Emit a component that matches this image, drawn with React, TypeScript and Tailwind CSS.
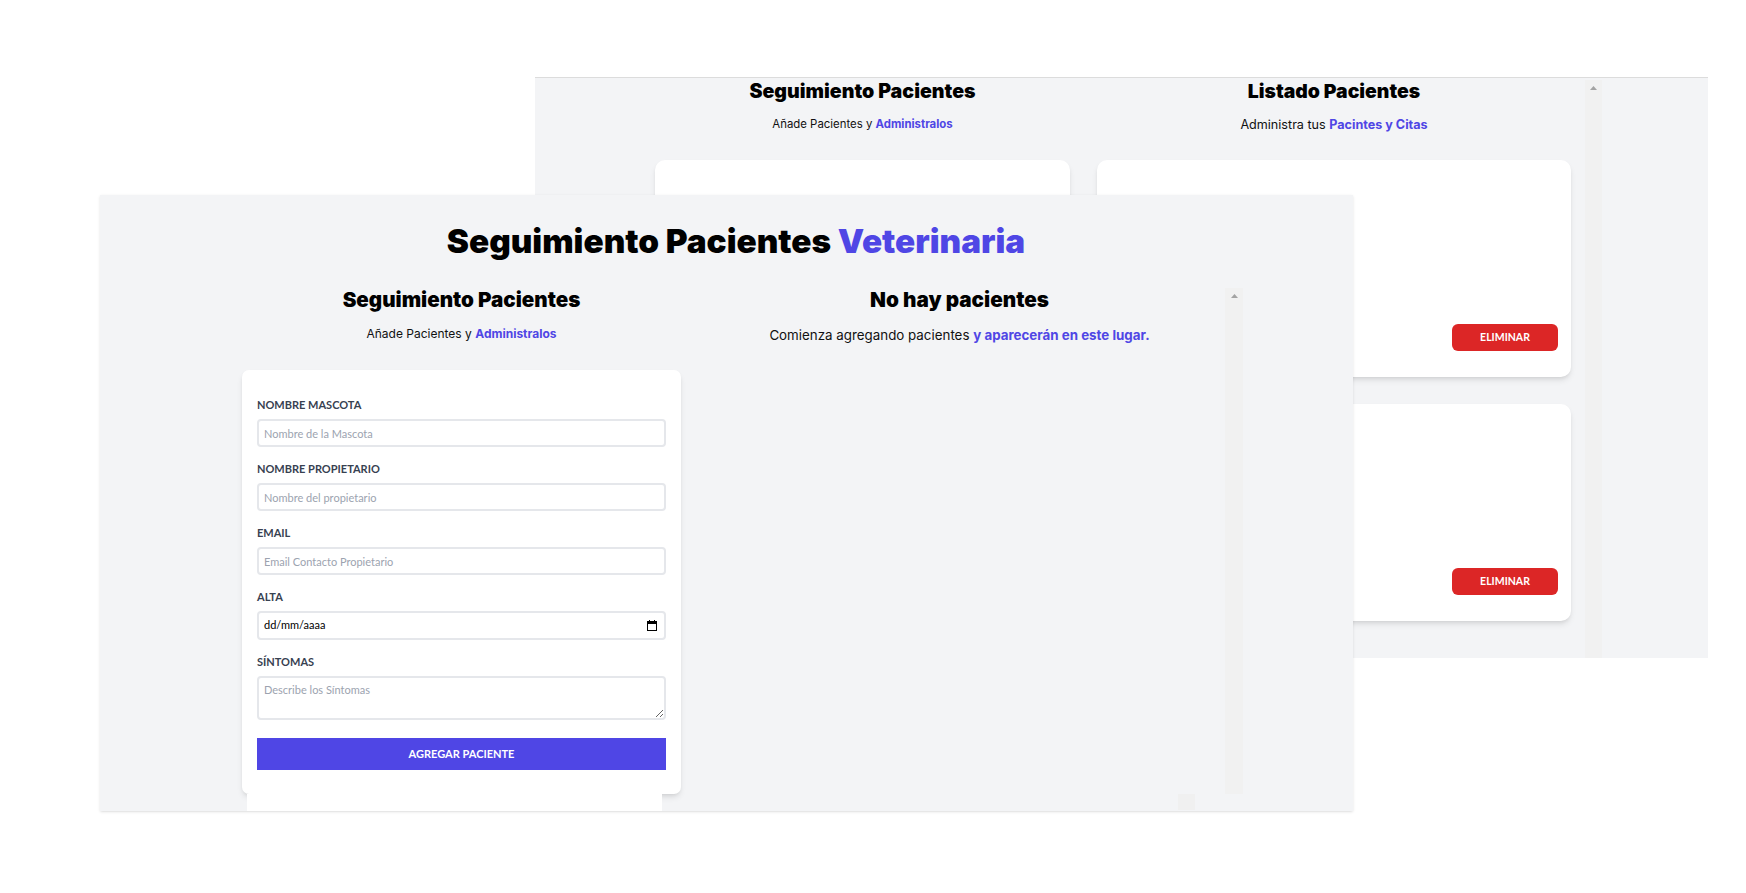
import React from "react";

const FIELDS = [
  { label: "Nombre Mascota", placeholder: "Nombre de la Mascota" },
  { label: "Nombre Propietario", placeholder: "Nombre del propietario" },
  { label: "Email", placeholder: "Email Contacto Propietario" },
];

function ScrollTrack({ className }: { className: string }) {
  return (
    <div className={`flex shrink-0 justify-center bg-[#f1f1f1] ${className}`}>
      <svg width="7" height="4" viewBox="0 0 7 4" className="mt-[6px]">
        <path d="M3.5 0L7 4H0z" fill="#a3a3a3" />
      </svg>
    </div>
  );
}

function CalendarIcon() {
  return (
    <svg width="10" height="11" viewBox="0 0 10 11" fill="none">
      <rect x="0.5" y="1.5" width="9" height="9" stroke="#000" />
      <rect x="0.5" y="1.5" width="9" height="2.5" fill="#000" />
      <rect x="2" y="0" width="1" height="2" fill="#000" />
      <rect x="7" y="0" width="1" height="2" fill="#000" />
    </svg>
  );
}

function PatientCard() {
  return (
    <div className="flex h-[217px] flex-col items-end justify-end rounded-[10px] bg-white px-[13px] pb-[26px] shadow-md">
      <button className="h-[27px] w-[106px] rounded-[6px] bg-[#dc2626] text-[10.5px] font-bold uppercase text-white">
        Eliminar
      </button>
    </div>
  );
}

function BackWindow() {
  return (
    <div className="absolute left-[535px] top-[77px] h-[581px] w-[1173px] overflow-hidden border-t border-[#dcdcdc] bg-[#f3f4f6]">
      <div className="flex pl-[120px] pt-[2px]">
        <div className="w-[415px] shrink-0">
          <h2 className="text-center font-[Inter,sans-serif] text-[19.6px] leading-[23px] font-black text-black">Seguimiento Pacientes</h2>
          <p className="mt-[13px] text-center font-[Inter,sans-serif] text-[11.4px] leading-[17px] text-[#111]">
            Añade Pacientes y <span className="font-bold text-[#4f46e5]">Administralos</span>
          </p>
          <div className="mt-[27px] h-[400px] rounded-[10px] bg-white shadow-md" />
        </div>
        <div className="ml-[27px] w-[474px] shrink-0">
          <h2 className="text-center font-[Inter,sans-serif] text-[19.4px] leading-[23px] font-black text-black">Listado Pacientes</h2>
          <p className="mt-[13px] text-center font-[Inter,sans-serif] text-[12.6px] leading-[17px] text-[#111]">
            Administra tus <span className="font-bold text-[#4f46e5]">Pacintes y Citas</span>
          </p>
          <div className="mt-[27px] flex flex-col gap-[27px]">
            <PatientCard />
            <PatientCard />
          </div>
        </div>
        <ScrollTrack className="ml-[14px] h-[600px] w-[17px]" />
      </div>
    </div>
  );
}

function FrontWindow() {
  return (
    <div className="absolute left-[100px] top-[195px] h-[616px] w-[1253px] overflow-hidden bg-[#f3f4f6] shadow-sm">
      <div className="ml-[129px] w-[1014px]">
        <h1 className="pt-[30px] text-center font-[Inter,sans-serif] text-[33.3px] leading-[32px] font-black text-black">
          Seguimiento Pacientes <span className="text-[#4f46e5]">Veterinaria</span>
        </h1>
        <div className="mt-[31px] flex">
          {/* Formulario */}
          <div className="w-[465px] shrink-0">
            <h2 className="text-center font-[Inter,sans-serif] text-[20.6px] leading-[24px] font-black text-black">Seguimiento Pacientes</h2>
            <p className="mt-[13px] text-center font-[Inter,sans-serif] text-[12px] leading-[18px] text-[#111]">
              Añade Pacientes y <span className="font-bold text-[#4f46e5]">Administralos</span>
            </p>
            <form className="mx-[13px] mt-[27px] rounded-[7px] bg-white px-[15px] pt-[28px] pb-[24px] shadow-md">
              {FIELDS.map((f) => (
                <div key={f.label} className="mb-[15px]">
                  <label className="block text-[11px] leading-[14px] font-bold uppercase text-[#374151]">{f.label}</label>
                  <input
                    readOnly
                    placeholder={f.placeholder}
                    className="mt-[7px] block h-[28px] w-full rounded-[4px] border-2 border-[#e5e7eb] px-[5px] text-[11px] placeholder:text-[#9ca3af]"
                  />
                </div>
              ))}
              <div className="mb-[15px]">
                <label className="block text-[11px] leading-[14px] font-bold uppercase text-[#374151]">Alta</label>
                <div className="mt-[7px] flex h-[29px] w-full items-center justify-between rounded-[4px] border-2 border-[#e5e7eb] pr-[7px] pl-[5px] text-[11px] text-black">
                  <span>dd/mm/aaaa</span>
                  <CalendarIcon />
                </div>
              </div>
              <div className="mb-[18px]">
                <label className="block text-[11px] leading-[14px] font-bold uppercase text-[#374151]">Síntomas</label>
                <textarea
                  readOnly
                  placeholder="Describe los Síntomas"
                  className="mt-[7px] block h-[44px] w-full rounded-[4px] border-2 border-[#e5e7eb] px-[5px] py-[4px] text-[11px] placeholder:text-[#9ca3af]"
                />
              </div>
              <button type="button" className="h-[32px] w-full bg-[#4f46e5] text-[11px] font-bold uppercase text-white">
                Agregar Paciente
              </button>
            </form>
            <div className="ml-[18px] h-[17px] w-[415px] bg-white" />
          </div>

          {/* Listado */}
          <div className="w-[549px] shrink-0">
            <div className="flex h-[506px]">
              <div className="flex-1">
                <h2 className="text-center font-[Inter,sans-serif] text-[20.7px] leading-[24px] font-black text-black">No hay pacientes</h2>
                <p className="mt-[13px] text-center font-[Inter,sans-serif] text-[13.35px] leading-[20px] text-[#111]">
                  Comienza agregando pacientes <span className="font-bold text-[#4f46e5]">y aparecerán en este lugar.</span>
                </p>
              </div>
              <ScrollTrack className="h-[506px] w-[18px]" />
            </div>
            <div className="ml-[484px] h-[16px] w-[17px] bg-[#f0f0f0]" />
          </div>
        </div>
      </div>
    </div>
  );
}

export default function App() {
  return (
    <div className="relative h-[893px] w-[1746px] overflow-hidden bg-white font-[Lato,'Liberation_Sans',sans-serif]">
      <BackWindow />
      <FrontWindow />
    </div>
  );
}
